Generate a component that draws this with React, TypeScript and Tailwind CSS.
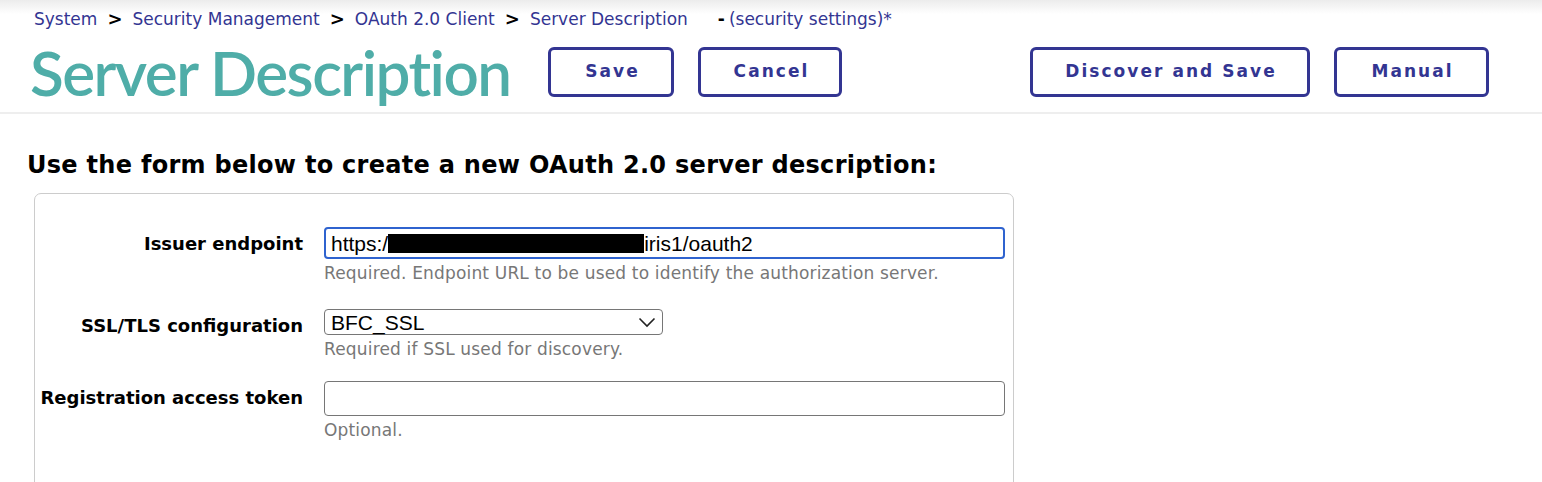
import React from "react";

const dejavu = { fontFamily: "'DejaVu Sans', Verdana, sans-serif" };
const lato = { fontFamily: "Lato, 'Noto Sans', sans-serif" };
const arial = { fontFamily: "'Liberation Sans', Arial, sans-serif" };

function OutlineButton({ label, width }: { label: string; width: string }) {
  return (
    <button
      type="button"
      className={`${width} h-[50px] rounded-[6px] border-[3px] border-[#333592] bg-white pl-[0.12em] text-[17px] font-bold tracking-[0.12em] text-[#333592]`}
    >
      {label}
    </button>
  );
}

function Field({
  label,
  help,
  children,
  rowClass = ""
}: {
  label: string;
  help: string;
  children: React.ReactNode;
  rowClass?: string;
}) {
  return (
    <div className={`grid grid-cols-[268px_1fr] gap-x-[21px] ${rowClass}`}>
      <div className="pt-[3px] text-right text-[18px] font-bold text-black">{label}</div>
      <div>
        {children}
        <p className="mt-[3px] text-[17px] leading-[22px] tracking-[0.01em] text-[#777]">{help}</p>
      </div>
    </div>
  );
}

export default function App() {
  return (
    <div className="min-h-[482px] w-[1542px] overflow-hidden bg-white" style={dejavu}>
      <div className="bg-[linear-gradient(#ececec,#fff_14px)] pl-[34px] pt-[8px]">
        <div className="flex items-baseline text-[17px] leading-[22px] text-[#333592]">
          <span>System</span>
          <span className="mx-[10px] text-[18px] font-bold text-black">&gt;</span>
          <span>Security Management</span>
          <span className="mx-[10px] text-[18px] font-bold text-black">&gt;</span>
          <span>OAuth 2.0 Client</span>
          <span className="mx-[10px] text-[18px] font-bold text-black">&gt;</span>
          <span>Server Description</span>
          <span className="ml-[30px] font-bold text-black">-</span>
          <span className="ml-[4px]">(security settings)*</span>
        </div>
      </div>

      <div className="flex items-center pl-[30px] pr-[53px] pt-[6px]">
        <h1
          className="text-[62px] font-semibold leading-[72px] tracking-[-0.025em] text-[#4fada8]"
          style={lato}
        >
          Server Description
        </h1>
        <div className="ml-[38px] flex gap-[24px]">
          <OutlineButton label="Save" width="w-[126px]" />
          <OutlineButton label="Cancel" width="w-[144px]" />
        </div>
        <div className="ml-auto flex gap-[24px]">
          <OutlineButton label="Discover and Save" width="w-[280px]" />
          <OutlineButton label="Manual" width="w-[155px]" />
        </div>
      </div>

      <div className="mt-[4px] h-[2px] bg-[#eeeeee]" />

      <h2 className="ml-[27px] mt-[36px] text-[24px] font-bold leading-[30px] tracking-[0.012em] text-black">
        Use the form below to create a new OAuth 2.0 server description:
      </h2>

      <div className="ml-[34px] mt-[13px] h-[300px] w-[980px] rounded-[7px] border border-[#cccccc] pt-[33px]">
        <Field label="Issuer endpoint" help="Required. Endpoint URL to be used to identify the authorization server.">
          <div
            className="flex h-[32px] w-[681px] items-center rounded-[4px] border-2 border-[#2f63cf] px-[5px] text-[21px] leading-none text-black"
            style={arial}
          >
            <span>https:/</span>
            <span className="inline-block h-[19px] w-[256px] bg-black" />
            <span>iris1/oauth2</span>
          </div>
        </Field>

        <Field rowClass="mt-[25px]" label="SSL/TLS configuration" help="Required if SSL used for discovery.">
          <div
            className="flex h-[26px] w-[339px] items-center justify-between rounded-[4px] border border-[#767676] px-[6px] text-[21px] leading-none text-black"
            style={arial}
          >
            <span>BFC_SSL</span>
            <svg width="18" height="11" viewBox="0 0 18 11" fill="none">
              <path d="M1.5 1.5 9 9l7.5-7.5" stroke="#222" strokeWidth="1.6" />
            </svg>
          </div>
        </Field>

        <Field rowClass="mt-[21px]" label="Registration access token" help="Optional.">
          <div className="h-[35px] w-[681px] rounded-[4px] border border-[#767676]" />
        </Field>
      </div>
    </div>
  );
}
